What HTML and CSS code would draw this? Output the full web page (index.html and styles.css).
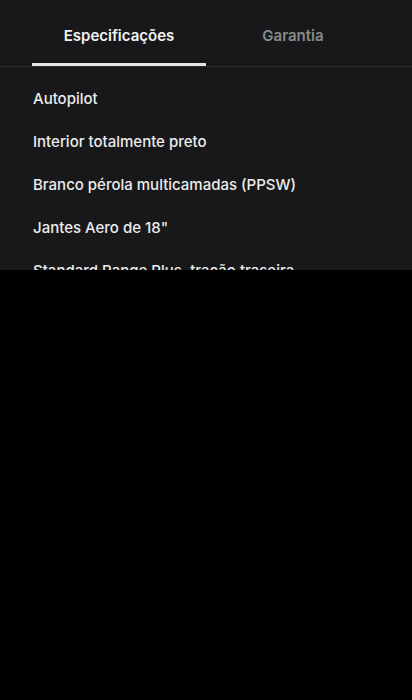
FILE: index.html
```html
<!DOCTYPE html>
<html lang="pt">
<head>
  <meta charset="UTF-8" />
  <meta name="viewport" content="width=device-width, initial-scale=1.0"/>
  <title>Especificações</title>
  <link rel="stylesheet" href="styles.css">
</head>
<body>
<div class="painel">
  <div class="abas">
    <div class="aba ativa">Especificações</div>
    <div class="aba">Garantia</div>
  </div>
  <ul class="lista">
    <li>Autopilot</li>
    <li>Interior totalmente preto</li>
    <li>Branco pérola multicamadas (PPSW)</li>
    <li>Jantes Aero de 18"</li>
    <li>Standard Range Plus, tração traseira</li>
  </ul>
</div>
</body>
</html>
```

FILE: styles.css
```css
body {
  margin: 0;
  background: #000;
  font-family: Inter, "Noto Sans", sans-serif;
  color: #ececec;
}
.painel {
  height: 270px;
  overflow: hidden;
  background: #18181a;
}
.abas {
  display: flex;
  padding: 0 32px;
  border-bottom: 1px solid #2b2b2e;
}
.aba {
  flex: 1;
  text-align: center;
  padding: 24px 0 15px;
  line-height: 24px;
  font-size: 15px;
  font-weight: 600;
  color: #8a8a8c;
  border-bottom: 3px solid transparent;
}
.aba.ativa {
  color: #f2f2f2;
  border-bottom-color: #e6e6e6;
}
.lista {
  list-style: none;
  margin: 0;
  padding: 10px 0 0 33px;
}
.lista li {
  line-height: 43px;
  font-size: 15px;
  font-weight: 500;
}
```
